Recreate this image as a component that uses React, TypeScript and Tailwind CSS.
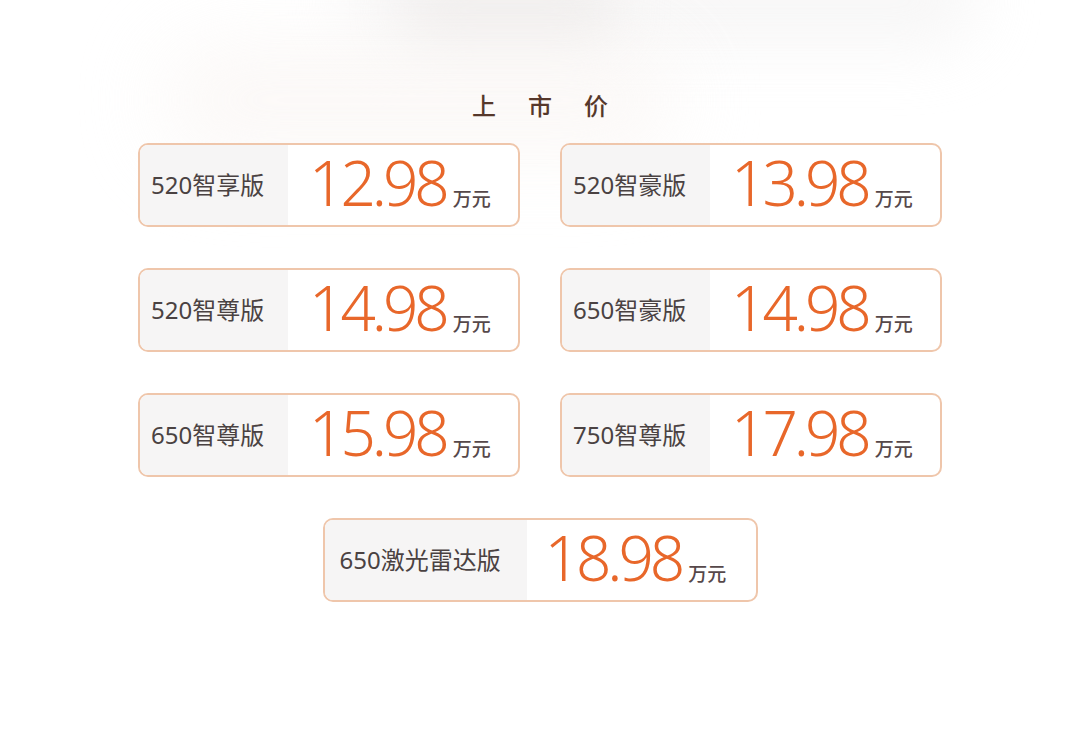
const PRICES = [
  { name: '520智享版', price: '12.98' },
  { name: '520智豪版', price: '13.98' },
  { name: '520智尊版', price: '14.98' },
  { name: '650智豪版', price: '14.98' },
  { name: '650智尊版', price: '15.98' },
  { name: '750智尊版', price: '17.98' },
]

function PriceCard({ name, price, wide }: { name: string; price: string; wide?: boolean }) {
  return (
    <div
      className={`flex h-[84px] rounded-[10px] border-[2px] border-[#efc6ab] bg-white ${
        wide ? 'w-[435px]' : 'w-[382px]'
      }`}
    >
      <div
        className={`flex items-center rounded-l-[8px] bg-[#f6f5f5] text-[24px] text-[#4a4242] ${
          wide ? 'w-[202px] pl-[15px]' : 'w-[148px] pl-[11px]'
        }`}
      >
        {name}
      </div>
      <div className={`flex items-baseline ${wide ? 'pl-[18px]' : 'pl-[21px]'}`}>
        <span className="text-[62px] font-light leading-[74px] tracking-[-4px] text-[#e8672a]">
          {price}
        </span>
        <span className="ml-[7px] text-[19px] font-medium text-[#56484a]">万元</span>
      </div>
    </div>
  )
}

export default function App() {
  return (
    <div
      className="relative h-[734px] w-[1080px] overflow-hidden bg-white"
      style={{ fontFamily: '"Noto Sans", "Noto Sans CJK SC", sans-serif' }}
    >
      {/* faint blurred backdrop at the top */}
      <div className="pointer-events-none absolute -top-[50px] left-[340px] h-[100px] w-[640px] rounded-full bg-[#f3f2f2] opacity-60 blur-[30px]" />
      <div className="pointer-events-none absolute -top-[30px] left-[400px] h-[80px] w-[220px] rounded-full bg-[#ebe8e7] opacity-60 blur-[25px]" />
      <div className="pointer-events-none absolute top-[40px] left-[160px] h-[120px] w-[520px] rounded-full bg-[#faf6f4] opacity-70 blur-[40px]" />

      <div className="relative flex flex-col items-center pt-[88px]">
        <h1 className="pl-[32px] text-[24px] font-medium leading-[36px] tracking-[32px] text-[#56382b]">上市价</h1>
        <div className="mt-[19px] grid grid-cols-[382px_382px] gap-x-[40px] gap-y-[41px]">
          {PRICES.map((p) => (
            <PriceCard key={p.name + p.price} name={p.name} price={p.price} />
          ))}
        </div>
        <div className="mt-[41px]">
          <PriceCard name="650激光雷达版" price="18.98" wide />
        </div>
      </div>
    </div>
  )
}
